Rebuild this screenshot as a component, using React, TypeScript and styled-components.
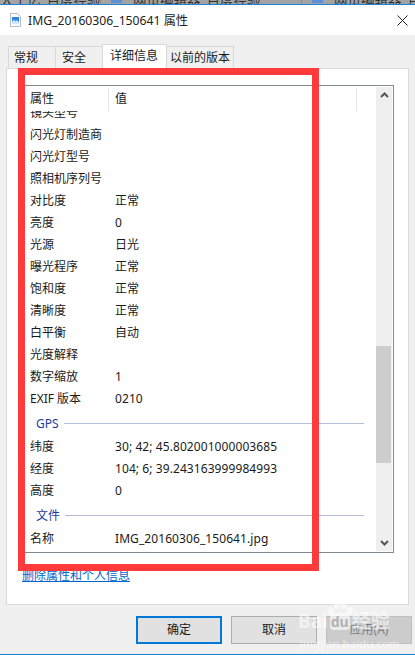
import styled, { createGlobalStyle } from "styled-components";

const rows = [
    ["闪光灯制造商", ""],
    ["闪光灯型号", ""],
    ["照相机序列号", ""],
    ["对比度", "正常"],
    ["亮度", "0"],
    ["光源", "日光"],
    ["曝光程序", "正常"],
    ["饱和度", "正常"],
    ["清晰度", "正常"],
    ["白平衡", "自动"],
    ["光度解释", ""],
    ["数字缩放", "1"],
    ["EXIF 版本", "0210"],
];

const gpsRows = [
    ["纬度", "30; 42; 45.802001000003685"],
    ["经度", "104; 6; 39.243163999984993"],
    ["高度", "0"],
];

const GlobalStyle = createGlobalStyle`
    html, body {
        margin: 0;
        padding: 0;
        background: #f0f0f0;
    }
`;

export default function App() {
    return (
        <>
            <GlobalStyle />
            <Dialog>
                <BrowserStrip>
                    <BrowserTab $width={101}>大十亿_百度经验</BrowserTab>
                    <BrowserTab $width={201}>
                        <Favicon />
                        网页编辑器_百度经验
                    </BrowserTab>
                    <BrowserTab $width={113}>
                        <Favicon />
                        网页编辑器_百度经验
                    </BrowserTab>
                </BrowserStrip>
                <TitleBar>
                    <FileIcon width="11" height="14" viewBox="0 0 11 14">
                        <path d="M0.5 0.5H7.5L10.5 3.5V13.5H0.5Z" fill="#f7f9fb" stroke="#b4bcc6" />
                        <path d="M2 4H9V11H2Z" fill="#2a86e0" />
                        <path d="M2 11V9L4 6.5L5.5 8.5L7 7L9 9.5V11Z" fill="#cfe6fb" />
                    </FileIcon>
                    <TitleText>IMG_20160306_150641 属性</TitleText>
                    <CloseIcon width="11" height="11" viewBox="0 0 11 11">
                        <path d="M0.5 0.5L10.5 10.5M10.5 0.5L0.5 10.5" stroke="#222" strokeWidth="1" fill="none" />
                    </CloseIcon>
                </TitleBar>
                <Body>
                    <Tabs>
                        <Tab $width={48} $pad={5}>常规</Tab>
                        <Tab $width={48} $pad={6}>安全</Tab>
                        <ActiveTab>详细信息</ActiveTab>
                        <Tab $width={69} $pad={4}>以前的版本</Tab>
                    </Tabs>
                    <Panel>
                        <List>
                            <ListMain>
                                <ListHeader>
                                    <HeaderCell $width={83}>属性</HeaderCell>
                                    <HeaderCell $width={248}>值</HeaderCell>
                                </ListHeader>
                                <ListRows>
                                    <ClippedRow>
                                        <NameCell>镜头型号</NameCell>
                                    </ClippedRow>
                                    {rows.map(([name, value]) => (
                                        <Row key={name}>
                                            <NameCell>{name}</NameCell>
                                            <ValueCell>{value}</ValueCell>
                                        </Row>
                                    ))}
                                    <GroupRow>
                                        <GroupLabel>GPS</GroupLabel>
                                        <GroupLine />
                                    </GroupRow>
                                    {gpsRows.map(([name, value]) => (
                                        <Row key={name}>
                                            <NameCell>{name}</NameCell>
                                            <ValueCell>{value}</ValueCell>
                                        </Row>
                                    ))}
                                    <GroupRow>
                                        <GroupLabel>文件</GroupLabel>
                                        <GroupLine />
                                    </GroupRow>
                                    <Row>
                                        <NameCell>名称</NameCell>
                                        <ValueCell>IMG_20160306_150641.jpg</ValueCell>
                                    </Row>
                                </ListRows>
                            </ListMain>
                            <ScrollBar>
                                <ScrollArrow width="9" height="6" viewBox="0 0 9 6">
                                    <path d="M1 5L4.5 1.5L8 5" stroke="#555" strokeWidth="2" fill="none" />
                                </ScrollArrow>
                                <ScrollThumb />
                                <ScrollArrow width="9" height="6" viewBox="0 0 9 6">
                                    <path d="M1 1L4.5 4.5L8 1" stroke="#555" strokeWidth="2" fill="none" />
                                </ScrollArrow>
                            </ScrollBar>
                        </List>
                        <RemoveLink>删除属性和个人信息</RemoveLink>
                    </Panel>
                    <Buttons>
                        <PrimaryButton>确定</PrimaryButton>
                        <DialogButton>取消</DialogButton>
                        <DisabledButton>应用(A)</DisabledButton>
                    </Buttons>
                </Body>
                <Highlight />
                <Watermark>
                    <Paw width="27" height="20" viewBox="0 0 27 20">
                        <ellipse cx="5" cy="10" rx="3" ry="4" />
                        <ellipse cx="11" cy="4.5" rx="3" ry="4" />
                        <ellipse cx="18" cy="4.5" rx="3" ry="4" />
                        <ellipse cx="24" cy="10" rx="2.8" ry="4" />
                    </Paw>
                    <WatermarkLogo>
                        Bai<DuBadge>du</DuBadge>经验
                    </WatermarkLogo>
                    <WatermarkUrl>jingyan.baidu.com</WatermarkUrl>
                </Watermark>
            </Dialog>
        </>
    );
}

const Dialog = styled.div`
    position: relative;
    width: 415px;
    height: 655px;
    overflow: hidden;
    display: flex;
    flex-direction: column;
    background: #f0f0f0;
    font-family: "Noto Sans", "Noto Sans CJK SC", sans-serif;
    font-size: 12px;
    color: #1a1a1a;
    border-bottom: 1px solid #1a80d8;
    box-sizing: border-box;
`;

const BrowserStrip = styled.div`
    height: 5px;
    box-sizing: border-box;
    flex: none;
    display: flex;
    overflow: hidden;
    background: #a3a3a3;
    border-bottom: 1px solid #1a80d8;
`;

const BrowserTab = styled.div<{ $width: number }>`
    width: ${(p) => p.$width}px;
    box-sizing: border-box;
    flex: none;
    display: flex;
    overflow: hidden;
    padding-left: 10px;
    line-height: 0;
    font-size: 13.5px;
    color: #333;
    white-space: nowrap;
    border-right: 1px solid #8c8c8c;
    &:first-child {
        padding-left: 0;
    }
    &:last-child {
        border-right: none;
    }
`;

const Favicon = styled.span`
    width: 11px;
    height: 3px;
    flex: none;
    margin-right: 11px;
    background: #5b8fd8;
`;

const TitleBar = styled.div`
    height: 30px;
    flex: none;
    display: flex;
    align-items: center;
    padding: 0 7px 0 10px;
    background: #fff;
`;

const FileIcon = styled.svg`
    flex: none;
`;

const TitleText = styled.div`
    flex: 1;
    margin-left: 7px;
    font-size: 12.2px;
    color: #222;
`;

const CloseIcon = styled.svg`
    flex: none;
`;

const Body = styled.div`
    flex: 1;
    display: flex;
    flex-direction: column;
    padding: 9px 6px 0;
`;

const Tabs = styled.div`
    display: flex;
    height: 24px;
    padding-left: 3px;
    align-items: flex-end;
`;

const Tab = styled.div<{ $width: number; $pad: number }>`
    width: ${(p) => p.$width}px;
    height: 22px;
    box-sizing: border-box;
    border: 1px solid #d9d9d9;
    border-bottom: none;
    margin-left: -1px;
    padding-left: ${(p) => p.$pad}px;
    line-height: 22px;
    background: #f0f0f0;
    white-space: nowrap;
`;

const ActiveTab = styled.div`
    position: relative;
    z-index: 1;
    width: 65px;
    height: 24px;
    box-sizing: border-box;
    border: 1px solid #d9d9d9;
    border-bottom: none;
    margin: 0 -1px 0 -1px;
    padding-left: 7px;
    line-height: 22px;
    background: #fff;
`;

const Panel = styled.div`
    height: 537px;
    box-sizing: border-box;
    border: 1px solid #d9d9d9;
    background: #fff;
    padding: 16px 14px 0 17px;
`;

const List = styled.div`
    display: flex;
    height: 468px;
    box-sizing: border-box;
    border: 1px solid #828790;
    background: #fff;
    padding: 1px;
`;

const ListMain = styled.div`
    flex: 1;
    min-width: 0;
    display: flex;
    flex-direction: column;
`;

const ListHeader = styled.div`
    display: flex;
    height: 24px;
    flex: none;
`;

const HeaderCell = styled.div<{ $width: number }>`
    width: ${(p) => p.$width}px;
    box-sizing: border-box;
    border-right: 1px solid #e5e5e5;
    padding-left: 4px;
    line-height: 24px;
    & + & {
        padding-left: 6px;
    }
`;

const ListRows = styled.div`
    flex: 1;
    overflow: hidden;
`;

const Row = styled.div`
    display: flex;
    height: 22px;
    line-height: 22px;
    padding-left: 4px;
    white-space: nowrap;
`;

const ClippedRow = styled(Row)`
    height: 13px;
    line-height: 4px;
    overflow: hidden;
`;

const NameCell = styled.span`
    width: 85px;
    flex: none;
`;

const ValueCell = styled.span`
    letter-spacing: 0.08px;
`;

const GroupRow = styled.div`
    display: flex;
    align-items: center;
    height: 26px;
    padding-left: 10px;
`;

const GroupLabel = styled.span`
    color: #1e3a9e;
`;

const GroupLine = styled.div`
    flex: 1;
    height: 1px;
    margin: 0 12px 0 5px;
    background: #b5bcd8;
`;

const ScrollBar = styled.div`
    width: 16px;
    flex: none;
    position: relative;
    display: flex;
    flex-direction: column;
    align-items: center;
    justify-content: space-between;
    padding: 5px 0;
    box-sizing: border-box;
    background: #efefef;
`;

const ScrollArrow = styled.svg`
    flex: none;
`;

const ScrollThumb = styled.div`
    position: absolute;
    left: 0;
    right: 1px;
    top: 259px;
    height: 117px;
    background: #cdcdcd;
`;

const RemoveLink = styled.div`
    margin-top: 13px;
    margin-left: -2px;
    color: #0066cc;
    text-decoration: underline;
`;

const Buttons = styled.div`
    display: flex;
    justify-content: flex-end;
    gap: 9px;
    margin-top: 11px;
    margin-right: -3px;
`;

const DialogButton = styled.div`
    width: 86px;
    height: 28px;
    box-sizing: border-box;
    border: 1px solid #adadad;
    background: #e1e1e1;
    text-align: center;
    line-height: 26px;
`;

const PrimaryButton = styled(DialogButton)`
    border: 2px solid #0078d7;
    line-height: 24px;
`;

const DisabledButton = styled(DialogButton)`
    border-color: #bfbfbf;
    background: #ccc;
    color: #7d7d85;
`;

const Highlight = styled.div`
    position: absolute;
    left: 18px;
    top: 68px;
    width: 301px;
    height: 503px;
    box-sizing: border-box;
    border: 7px solid #ff3a3a;
    pointer-events: none;
`;

const Watermark = styled.div`
    position: absolute;
    left: 298px;
    top: 601px;
    color: rgba(255, 255, 255, 0.6);
    pointer-events: none;
`;

const Paw = styled.svg`
    display: block;
    margin-left: 28px;
    fill: rgba(255, 255, 255, 0.6);
`;

const WatermarkLogo = styled.div`
    display: flex;
    align-items: center;
    margin-top: -10px;
    font-size: 19px;
    font-weight: 700;
    line-height: 20px;
    white-space: nowrap;
`;

const DuBadge = styled.span`
    margin: 0 2px 0 2px;
    padding: 0 1px;
    border-radius: 4px;
    font-size: 14px;
    line-height: 17px;
    color: rgba(170, 170, 170, 0.9);
    background: rgba(255, 255, 255, 0.6);
`;

const WatermarkUrl = styled.div`
    margin-top: 6px;
    margin-left: 2px;
    font-size: 11.5px;
    line-height: 13px;
    white-space: nowrap;
`;
